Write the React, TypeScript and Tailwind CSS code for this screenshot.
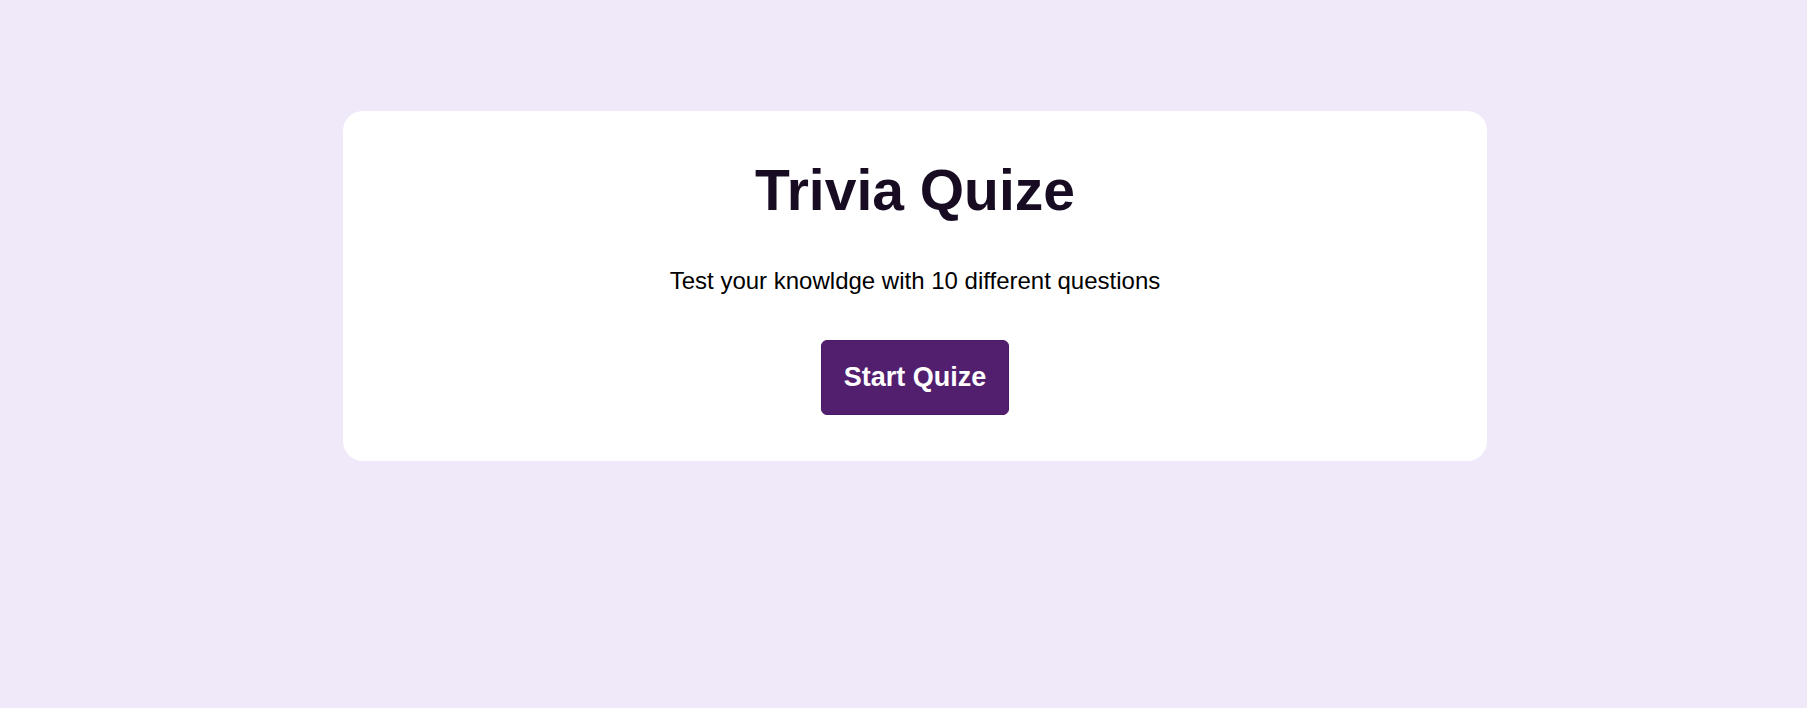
const App = () => {
  return (
    <div className="min-h-screen bg-[#f0e9fa] pt-[111px] pl-[343px] font-['Liberation_Sans',Arial,sans-serif]">
      <div className="w-[1144px] h-[350px] bg-white rounded-[20px] flex flex-col items-center pt-[51px]">
        <h1 className="text-[57px] leading-[57px] font-bold text-[#170c21]">Trivia Quize</h1>
        <p className="mt-[50px] text-[24px] leading-[24px] text-black">
          Test your knowldge with 10 different questions
        </p>
        <button className="mt-[47px] w-[188px] h-[75px] rounded-[6px] bg-[#521f6f] border border-[#4a1a66] text-white text-[27px] font-bold">
          Start Quize
        </button>
      </div>
    </div>
  );
};
export default App;
